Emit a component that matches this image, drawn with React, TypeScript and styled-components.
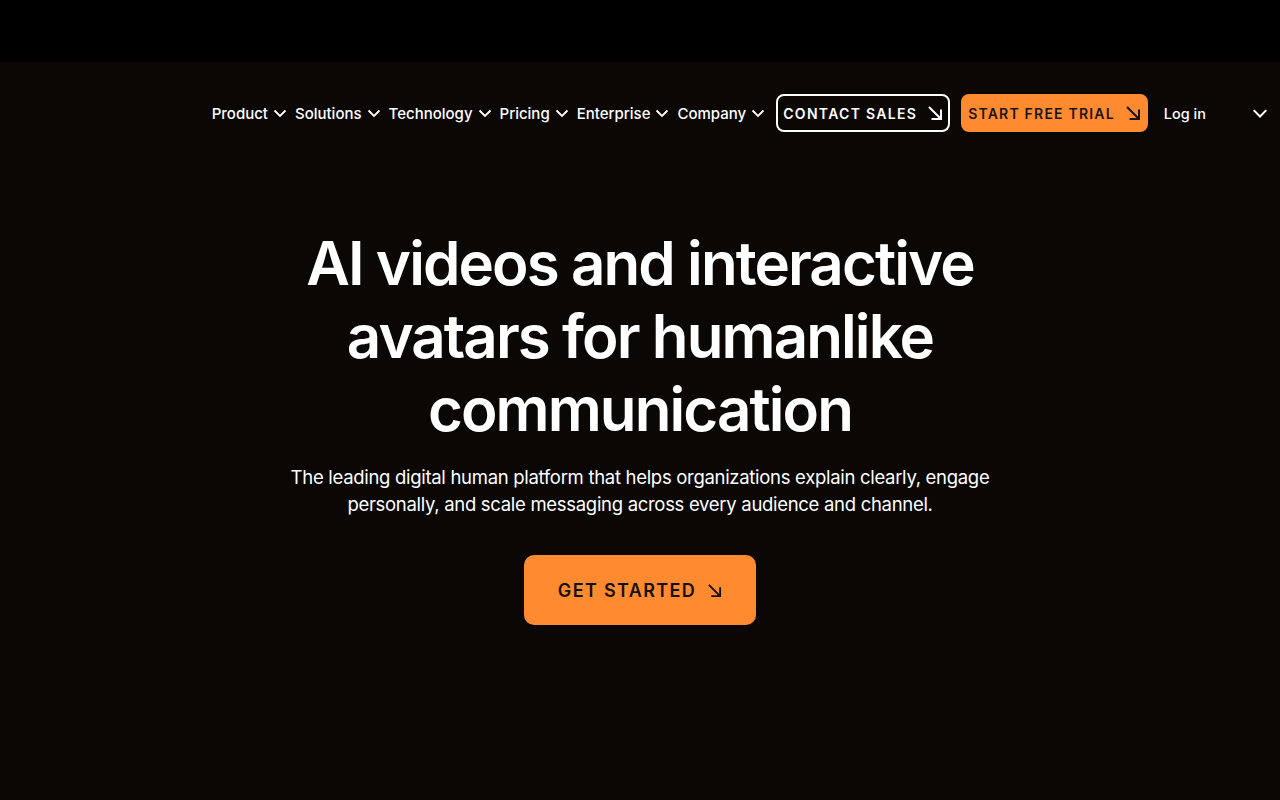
import React from "react";
import styled, { createGlobalStyle } from "styled-components";

const GlobalStyle = createGlobalStyle`
  html, body {
    margin: 0;
    padding: 0;
    background: #0a0705;
  }
  body {
    font-family: Inter, "Noto Sans", sans-serif;
    color: #fff;
  }
  * { box-sizing: border-box; }
`;

const orange = "#ff8a30";

const Page = styled.div`
  min-height: 800px;
  background: #0a0705;
`;

const TopBar = styled.div`
  height: 62px;
  background: #000;
`;

const NavBar = styled.nav`
  display: flex;
  justify-content: flex-end;
  align-items: center;
  height: 100px;
  padding: 2px 12px 0 0;
`;

const MenuList = styled.ul`
  display: flex;
  align-items: center;
  gap: 8px;
  margin: 0;
  padding: 0;
  list-style: none;
`;

const MenuItem = styled.li`
  display: flex;
  align-items: center;
  gap: 5px;
  font-size: 15px;
  font-weight: 500;
  color: #fff;
`;

const Actions = styled.div`
  display: flex;
  align-items: center;
  gap: 11px;
  margin-left: 11px;
`;

const NavButton = styled.a<{ $filled?: boolean }>`
  display: flex;
  align-items: center;
  justify-content: space-between;
  gap: 10px;
  height: 38px;
  padding: 0 5px;
  border-radius: 8px;
  border: 2px solid ${({ $filled }) => ($filled ? orange : "#fff")};
  background: ${({ $filled }) => ($filled ? orange : "transparent")};
  color: ${({ $filled }) => ($filled ? "#1a1410" : "#fff")};
  font-size: 14px;
  font-weight: 600;
  letter-spacing: ${({ $filled }) => ($filled ? "1.2px" : "1.3px")};
  text-decoration: none;
`;

const LogIn = styled.a`
  margin-left: 5px;
  font-size: 14.5px;
  font-weight: 500;
  color: #fff;
  text-decoration: none;
`;

const MenuToggle = styled.span`
  display: flex;
  margin-left: 46px;
`;

const Hero = styled.section`
  display: flex;
  flex-direction: column;
  align-items: center;
  padding-top: 65px;
  text-align: center;
`;

const Title = styled.h1`
  margin: 0;
  font-size: 60px;
  line-height: 73px;
  font-weight: 600;
  letter-spacing: -1.9px;
  color: #fff;
`;

const Lead = styled.p`
  margin: 18px 0 0;
  max-width: 720px;
  font-size: 18.5px;
  line-height: 27px;
  font-weight: 400;
  letter-spacing: -0.3px;
  color: #fff;
`;

const CTA = styled.a`
  display: flex;
  align-items: center;
  gap: 11px;
  margin-top: 37px;
  height: 70px;
  padding: 0 34px;
  border-radius: 10px;
  background: ${orange};
  color: #14100c;
  font-size: 18px;
  font-weight: 600;
  letter-spacing: 1.35px;
  text-decoration: none;
`;

const Chevron = ({ size = 14 }: { size?: number }) => (
  <svg width={size} height={size} viewBox="0 0 14 14" fill="none">
    <path d="M1.5 4.5 L7 10 L12.5 4.5" stroke="#fff" strokeWidth="1.8" />
  </svg>
);

const Arrow = ({ color, size = 16 }: { color: string; size?: number }) => (
  <svg width={size} height={size} viewBox="0 0 16 16" fill="none">
    <path d="M2 2 L14 14 M14 4.5 V14 H4.5" stroke={color} strokeWidth="2" />
  </svg>
);

const menu = ["Product", "Solutions", "Technology", "Pricing", "Enterprise", "Company"];

export default function App() {
  return (
    <Page>
      <GlobalStyle />
      <TopBar />
      <NavBar>
        <MenuList>
          {menu.map((m) => (
            <MenuItem key={m}>
              {m}
              <Chevron />
            </MenuItem>
          ))}
        </MenuList>
        <Actions>
          <NavButton href="#">
            CONTACT SALES
            <Arrow color="#fff" />
          </NavButton>
          <NavButton href="#" $filled>
            START FREE TRIAL
            <Arrow color="#1a1410" />
          </NavButton>
          <LogIn href="#">Log in</LogIn>
        </Actions>
        <MenuToggle>
          <Chevron size={16} />
        </MenuToggle>
      </NavBar>
      <Hero>
        <Title>
          AI videos and interactive
          <br />
          avatars for humanlike
          <br />
          communication
        </Title>
        <Lead>
          The leading digital human platform that helps organizations explain clearly, engage
          personally, and scale messaging across every audience and channel.
        </Lead>
        <CTA href="#">
          GET STARTED
          <Arrow color="#14100c" size={15} />
        </CTA>
      </Hero>
    </Page>
  );
}
